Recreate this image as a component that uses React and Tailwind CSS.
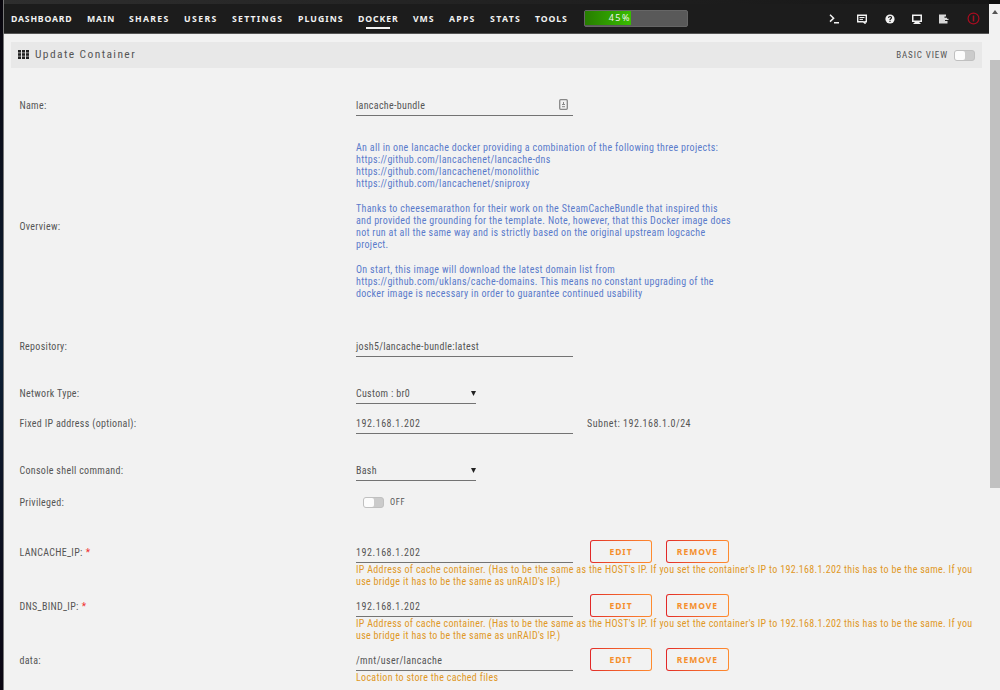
import React from 'react';

const tabs = [
    { label: 'DASHBOARD', cls: 'w-[76px] tracking-[0.8px]' },
    { label: 'MAIN', cls: 'w-[42px] tracking-[0.85px]' },
    { label: 'SHARES', cls: 'w-[55px] tracking-[1.3px]' },
    { label: 'USERS', cls: 'w-[48px] tracking-[1.4px]' },
    { label: 'SETTINGS', cls: 'w-[66px] tracking-[1.25px]' },
    { label: 'PLUGINS', cls: 'w-[60px] tracking-[1.05px]' },
    { label: 'DOCKER', cls: 'w-[55px] tracking-[0.9px]', active: true },
    { label: 'VMS', cls: 'w-[36px] tracking-[0.9px]' },
    { label: 'APPS', cls: 'w-[41px] tracking-[1.25px]' },
    { label: 'STATS', cls: 'w-[45px] tracking-[1.35px]' },
    { label: 'TOOLS', cls: 'w-[49px] tracking-[0.9px]' },
];

const overview = [
    'An all in one lancache docker providing a combination of the following three projects:',
    'https://github.com/lancachenet/lancache-dns',
    'https://github.com/lancachenet/monolithic',
    'https://github.com/lancachenet/sniproxy',
    '',
    'Thanks to cheesemarathon for their work on the SteamCacheBundle that inspired this',
    'and provided the grounding for the template. Note, however, that this Docker image does',
    'not run at all the same way and is strictly based on the original upstream logcache',
    'project.',
    '',
    'On start, this image will download the latest domain list from',
    'https://github.com/uklans/cache-domains. This means no constant upgrading of the',
    'docker image is necessary in order to guarantee continued usability',
];

const ipHelp = [
    "IP Address of cache container. (Has to be the same as the HOST's IP. If you set the container's IP to 192.168.1.202 this has to be the same. If you",
    "use bridge it has to be the same as unRAID's IP.)",
];

const settings = [
    { name: 'LANCACHE_IP:', required: true, value: '192.168.1.202', valueCls: 'tracking-[0.55px]', help: ipHelp },
    { name: 'DNS_BIND_IP:', required: true, value: '192.168.1.202', valueCls: 'tracking-[0.55px]', help: ipHelp },
    { name: 'data:', value: '/mnt/user/lancache', valueCls: 'tracking-[0.4px]', help: ['Location to store the cached files'] },
];

const Toggle = () => (
    <div className="w-[21px] h-[11px] rounded-[3px] bg-[#cbcbcb] border border-[#c0c0c0] flex">
        <div className="w-[10px] h-[9px] rounded-[2px] bg-[#fcfcfc]" />
    </div>
);

const Row = ({ label, required, className = '', children }) => (
    <div className={`flex h-[22px] items-center ${className}`}>
        <div className="w-[337px] shrink-0 pl-[0.5px] pt-[2px]">
            {label}
            {required && <span className="text-[#f03030] ml-[3px]">*</span>}
        </div>
        {children}
    </div>
);

const Input = ({ value, valueCls = '', children }) => (
    <div className="w-[217px] h-[22px] shrink-0 flex items-center justify-between border-b border-[#737373]">
        <span className={`pt-[2px] ${valueCls}`}>{value}</span>
        {children}
    </div>
);

const Select = ({ value }) => (
    <div className="w-[120px] h-[22px] shrink-0 flex items-center justify-between border-b border-[#737373]">
        <span className="pt-[2px]">{value}</span>
        <svg className="mt-[2px]" width="5" height="5" viewBox="0 0 5 5" fill="#222"><path d="M0 0h5L2.5 5z" /></svg>
    </div>
);

const Button = ({ className, children }) => (
    <div className={`h-[23px] -mt-px shrink-0 rounded-[3px] p-px bg-linear-to-r from-[#e22828] to-[#ff8c2f] ${className}`}>
        <div className="h-full rounded-[2px] bg-[#f2f2f2] flex items-center justify-center text-[#f58f2c] text-[8.5px] font-bold tracking-[1px] font-['Noto_Sans',sans-serif] [font-stretch:normal]">
            {children}
        </div>
    </div>
);

const HeaderIcons = () => (
    <div className="flex items-center ml-auto pr-[9px] text-[#f2f2f2]">
        <svg width="11" height="10" viewBox="0 0 11 10" fill="none" stroke="currentColor" strokeWidth="1.5"><path d="M1 .8l3.6 3.4L1 7.6M5 8.8h5" /></svg>
        <svg className="ml-[17px]" width="10" height="10" viewBox="0 0 10 10" fill="none" stroke="currentColor"><path d="M.7 1.2h8.6v6.5H8V9.2L6.2 7.7H.7z" strokeWidth="1.4" /><path d="M2.5 3.5h5M2.5 5.4h3.5" /></svg>
        <svg className="ml-[17.5px]" width="10" height="10" viewBox="0 0 10 10"><circle cx="5" cy="5" r="4.6" fill="currentColor" /><path d="M3.5 3.9C3.6 2 6.5 2.1 6.5 3.8 6.5 4.8 5 4.8 5 6M5 6.8v1.1" fill="none" stroke="#1c1c1c" strokeWidth="1.2" /></svg>
        <svg className="ml-[17.5px]" width="10" height="10" viewBox="0 0 10 10"><path d="M0 .5h10v7.5H7.5v1H8.5v1H1.500v-1h1v-1H0zM1.500 2v4.500h7V2z" fill="currentColor" fillRule="evenodd" /></svg>
        <svg className="ml-[17px]" width="10" height="10" viewBox="0 0 10 10" fill="#d8d8d8"><path d="M0 .5h7v2H5.500v1.200H8v1H9.500v1.200H6v1h2.500v2.600H0z" /></svg>
        <svg className="ml-[18px]" width="13" height="13" viewBox="0 0 13 13" fill="none" stroke="#a80d20"><circle cx="6.5" cy="6.5" r="5.4" strokeWidth="1.2" /><path d="M6.5 3.5v6" strokeWidth="1.5" /></svg>
    </div>
);

const Header = () => (
    <div className="h-[29px] mt-[4px] bg-[#1c1c1c] border-b border-[#555] box-content flex items-center pl-[7px] font-['Noto_Sans',sans-serif] [font-stretch:normal]">
        {tabs.map(t => (
            <div key={t.label} className={`relative pt-px text-[8.7px] font-bold text-[#f2f2f2] ${t.cls}`}>
                {t.label}
                {t.active && <div className="absolute left-[8px] top-[15px] w-[24px] h-[1.5px] bg-[#f2f2f2]" />}
            </div>
        ))}
        <div className="w-[104px] h-[17px] rounded-[2px] border border-[#666] bg-[#595959] shrink-0">
            <div className="w-[46px] h-[14px] bg-linear-to-r from-[#277d00] to-[#38bd00] text-right text-[9px] leading-[13px] text-[#f2f2f2] tracking-[1.5px]">45%</div>
        </div>
        <HeaderIcons />
    </div>
);

const App = () => (
    <div className="w-[1000px] h-[690px] overflow-hidden bg-[#f2f2f2] flex text-[10px] leading-[12px] tracking-[0.31px] text-[#555] whitespace-nowrap font-['Roboto',sans-serif] [font-stretch:condensed]">
        <div className="w-[4px] shrink-0 border-r border-[#777] bg-linear-to-b from-[#08050c] via-[#0c2035] to-[#0a0612]" />
        <div className="w-[985px] shrink-0 bg-linear-to-r from-[#2e2e2e] to-[#161616] bg-[length:100%_4px] bg-no-repeat">
            <Header />
            <div className="mx-[7px] mt-[8px] h-[26px] bg-[#e8e8e8] flex items-center px-[7px]">
                <svg className="-mt-px" width="11" height="9" viewBox="0 0 11 9" fill="#222">
                    {[0, 4, 8].map(x => [0, 3.2, 6.4].map(y => <rect key={`${x}-${y}`} x={x} y={y} width="3" height="2.6" />))}
                </svg>
                <span className="ml-[6px] -mt-[2px] text-[11.5px] tracking-[1.4px]">Update Container</span>
                <span className="ml-auto mr-[6px] text-[9px] tracking-[0.9px]">BASIC VIEW</span>
                <Toggle />
            </div>
            <div className="pl-[15px]">
                <Row label="Name:" className="mt-[26px]">
                    <Input value="lancache-bundle">
                        <svg className="mr-[5px]" width="9" height="11" viewBox="0 0 9 11" fill="none" stroke="#888"><rect x=".7" y=".7" width="7.6" height="9.6" rx="1" strokeWidth="1.3" /><path d="M4.5 3v3M3 5.5h3M3 7.700h3" /></svg>
                    </Input>
                </Row>
                <div className="flex items-center mt-[26px] h-[158px]">
                    <div className="w-[337px] shrink-0 pl-[0.5px] pt-[12px]">Overview:</div>
                    <div className="text-[#5a7bcb] leading-[12.17px]">
                        {overview.map((line, i) => <div key={i} className="h-[12.17px]">{line}</div>)}
                    </div>
                </div>
                <Row label="Repository:" className="mt-[35px]"><Input value="josh5/lancache-bundle:latest" /></Row>
                <Row label="Network Type:" className="mt-[25px]"><Select value="Custom : br0" /></Row>
                <Row label="Fixed IP address (optional):" className="mt-[8px]">
                    <Input value="192.168.1.202" valueCls="tracking-[0.55px]" />
                    <span className="ml-[14px] pt-[2px] tracking-[0.5px]">Subnet: 192.168.1.0/24</span>
                </Row>
                <Row label="Console shell command:" className="mt-[25px]"><Select value="Bash" /></Row>
                <Row label="Privileged:" className="mt-[10px]">
                    <div className="pl-[7px] flex items-center">
                        <Toggle />
                        <span className="ml-[6px] text-[8.5px] tracking-[0.7px]">OFF</span>
                    </div>
                </Row>
                <div className="mt-[28px] space-y-[7px]">
                    {settings.map(s => (
                        <div key={s.name}>
                            <Row label={s.name} required={s.required}>
                                <Input value={s.value} valueCls={s.valueCls} />
                                <Button className="ml-[17px] w-[62px]">EDIT</Button>
                                <Button className="ml-[14px] w-[63px]">REMOVE</Button>
                            </Row>
                            <div className="pl-[337px] pt-px text-[#e09826]">
                                {s.help.map(line => <div key={line}>{line}</div>)}
                            </div>
                        </div>
                    ))}
                </div>
            </div>
        </div>
        <div className="w-[11px] shrink-0 pl-px pt-[4px] bg-[#f2f2f2] border-t-4 border-[#111]">
            <svg className="ml-[2px] mt-[2px]" width="6" height="4" viewBox="0 0 6 4" fill="#555"><path d="M0 4h6L3 0z" /></svg>
            <div className="mt-[46px] h-[428px] bg-[#c1c1c1]" />
        </div>
    </div>
);

export default App;
